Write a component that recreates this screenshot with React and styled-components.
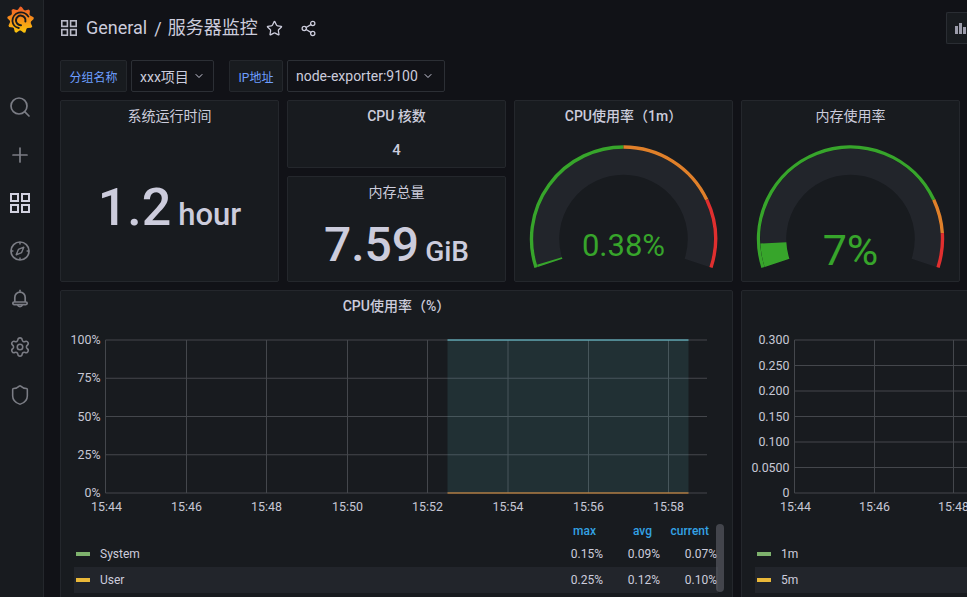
import React from 'react';
import styled, { createGlobalStyle } from 'styled-components';
import { Search, Plus, Settings, Shield, Star, Share2, ChevronDown } from 'lucide-react';

const GlobalStyle = createGlobalStyle`
  html, body {
    margin: 0;
    height: 100%;
    overflow: hidden;
    background: #111217;
  }
  * { box-sizing: border-box; }
`;

const fontStack = `Roboto, "Noto Sans CJK SC", sans-serif`;

const Page = styled.div`
  display: flex;
  width: 967px;
  height: 597px;
  overflow: hidden;
  background: #111217;
  color: #ccccdc;
  font-family: ${fontStack};
`;

const Sidebar = styled.nav`
  flex: 0 0 44px;
  display: flex;
  flex-direction: column;
  align-items: center;
  background: #181b1f;
  border-right: 1px solid #24272c;
`;

const LogoWrap = styled.div`
  height: 83px;
  padding-top: 6px;
  margin-left: -2px;
`;

const NavItem = styled.div`
  flex: 0 0 48px;
  width: 100%;
  display: flex;
  align-items: center;
  justify-content: center;
  padding-right: 3px;
  color: ${p => (p.$active ? '#d2d2e0' : '#7b7d85')};
`;

const Main = styled.main`
  flex: 1;
  min-width: 0;
  padding: 0 0 0 16px;
  display: flex;
  flex-direction: column;
`;

const TopBar = styled.header`
  flex: 0 0 60px;
  display: flex;
  align-items: center;
  padding: 0 0 4px 1px;
`;

const Crumb = styled.span`
  margin-left: ${p => p.$gap ?? 9}px;
  font-size: 18px;
  line-height: 24px;
  color: #ccccdc;
  white-space: nowrap;
`;

const Slash = styled.span`
  margin: 0 6px 0 7px;
  font-size: 18px;
  color: #ccccdc;
`;

const ToolIcon = styled.span`
  display: inline-flex;
  color: #ccccdc;
  margin-left: ${p => p.$gap}px;
`;

const EdgeButton = styled.div`
  margin-left: auto;
  margin-right: -1px;
  width: 22px;
  height: 32px;
  background: #181b1f;
  border: 1px solid #2a2d33;
  border-right: none;
  border-radius: 2px 0 0 2px;
  padding: 0 0 9px 8px;
  overflow: hidden;
  display: flex;
  align-items: flex-end;
  gap: 1px;
`;

const Bar = styled.i`
  display: block;
  flex: 0 0 3px;
  height: ${p => p.$h}px;
  background: #9c9cab;
`;

const Variables = styled.div`
  flex: 0 0 32px;
  display: flex;
  margin-bottom: 8px;
`;

const VarLabel = styled.div`
  height: 32px;
  padding: 0 8px;
  display: flex;
  align-items: center;
  justify-content: center;
  width: ${p => p.$w}px;
  margin-left: ${p => p.$gap || 0}px;
  font-size: 12px;
  color: #6e9fff;
  background: #181b1f;
  border: 1px solid #24272c;
  border-radius: 2px;
  white-space: nowrap;
`;

const VarSelect = styled.div`
  height: 32px;
  width: ${p => p.$w}px;
  margin-left: 4px;
  padding-left: 8px;
  display: flex;
  align-items: center;
  gap: 4px;
  font-size: 14px;
  color: #ccccdc;
  background: #111217;
  border: 1px solid #2c2f35;
  border-radius: 2px;
  white-space: nowrap;
`;

const Grid = styled.div`
  flex: 0 0 182px;
  display: grid;
  grid-template-columns: 219px 219px 219px 219px;
  grid-template-rows: 68px 106px;
  gap: 8px;
`;

const Panel = styled.section`
  position: relative;
  min-width: 0;
  min-height: 0;
  background: #181b1f;
  border: 1px solid #24272c;
  border-radius: 2px;
  display: flex;
  flex-direction: column;
  grid-column: ${p => p.$col};
  grid-row: ${p => p.$row};
  overflow: hidden;
`;

const PanelTitle = styled.h2`
  margin: 0;
  flex: 0 0 30px;
  height: 30px;
  line-height: 30px;
  text-align: center;
  font-size: 14px;
  font-weight: ${p => (p.$bold ? 500 : 400)};
  color: #ccccdc;
  white-space: nowrap;
`;

const StatBody = styled.div`
  flex: 1;
  display: flex;
  align-items: center;
  justify-content: center;
  padding-top: ${p => p.$pt || 0}px;
  color: #ccccdc;
  font-size: ${p => p.$size}px;
  font-weight: 500;
  line-height: 1;
  white-space: nowrap;
`;

const StatText = styled.span`
  display: inline-block;
`;

const Unit = styled.span`
  font-size: ${p => p.$size}px;
  margin-left: ${p => p.$gap}px;
`;

const GaugeSvg = styled.svg`
  display: block;
  margin-top: -30px;
  flex: 0 0 auto;
`;

const Charts = styled.div`
  flex: 0 0 320px;
  display: grid;
  grid-template-columns: 673px 400px;
  gap: 8px;
  margin-top: 8px;
`;

const ChartPanel = styled.section`
  min-width: 0;
  background: #181b1f;
  border: 1px solid #24272c;
  border-radius: 2px;
  position: relative;
  overflow: hidden;
`;

const ChartSvg = styled.svg`
  display: block;
  margin-top: 5px;
  height: 194px;
  width: 100%;
`;

const Legend = styled.div`
  position: relative;
  margin: 2px 0 0 ${p => p.$left}px;
  width: ${p => p.$width}px;
  font-size: 12px;
`;

const LegendHead = styled.div`
  display: grid;
  grid-template-columns: 1fr 57px 57px 57px;
  height: 18px;
  line-height: 18px;
  padding-right: 1px;
  font-weight: 500;
  color: #33a2e5;
  text-align: right;
  margin-bottom: 1px;
`;

const HeadCell = styled.div`
  padding-right: ${p => p.$pad}px;
`;

const LegendRow = styled.div`
  display: grid;
  grid-template-columns: 1fr 57px 57px 57px;
  align-items: center;
  height: 26px;
  padding-right: 1px;
  color: #ccccdc;
  background: ${p => (p.$alt ? '#22252b' : 'transparent')};
`;

const SeriesName = styled.div`
  display: flex;
  align-items: center;
  gap: 10px;
  padding-left: 2px;
`;

const Swatch = styled.i`
  display: block;
  width: 14px;
  height: 4px;
  background: ${p => p.$color};
`;

const Value = styled.div`
  text-align: right;
`;

const Scrollbar = styled.div`
  position: absolute;
  top: 2px;
  right: -6px;
  width: 8px;
  height: 68px;
  border-radius: 4px;
  background: rgba(120, 122, 130, 0.45);
`;

// spiky outline of the logo
const logoOutline = () => {
  const pts = [];
  const cx = 13.5;
  const cy = 14;
  const step = (Math.PI * 2) / 9;
  for (let i = 0; i < 9; i++) {
    const a = i * step - Math.PI / 2 - 0.25;
    [[10.6, 0], [13.4, step * 0.32], [13.2, step * 0.5], [10.6, step * 0.82]].forEach(([r, off]) => {
      pts.push(`${(cx + Math.cos(a + off) * r).toFixed(1)},${(cy + Math.sin(a + off) * r).toFixed(1)}`);
    });
  }
  return pts.join(' ');
};

const Logo = () => (
  <svg width="27" height="28" viewBox="0 0 27 28">
    <defs>
      <linearGradient id="logoGrad" x1="0" y1="0" x2="0" y2="28" gradientUnits="userSpaceOnUse">
        <stop offset="0" stopColor="#f05a28" />
        <stop offset="1" stopColor="#fbca0a" />
      </linearGradient>
    </defs>
    <polygon points={logoOutline()} fill="url(#logoGrad)" />
    <path
      d="M21.4 10.6a8.6 8.6 0 0 0-16 4.4a8 8 0 0 0 6.4 7"
      fill="none"
      stroke="#181b1f"
      strokeWidth="1.8"
      strokeLinecap="round"
    />
    <path
      d="M18.4 15.6a4.8 4.8 0 1 0-4.4 3.6"
      fill="none"
      stroke="#181b1f"
      strokeWidth="2"
      strokeLinecap="round"
    />
  </svg>
);

const GridIcon = ({ size = 20, color = 'currentColor' }) => (
  <svg width={size} height={size} viewBox="0 0 20 20" fill="none" stroke={color} strokeWidth="2">
    <rect x="1" y="1" width="7" height="7" />
    <rect x="12" y="1" width="7" height="7" />
    <rect x="1" y="12" width="7" height="7" />
    <rect x="12" y="12" width="7" height="7" />
  </svg>
);

const CompassIcon = () => (
  <svg width="20" height="20" viewBox="0 0 20 20" fill="none" stroke="currentColor" strokeWidth="1.7">
    <circle cx="10" cy="10" r="9" />
    <path d="M10 1v2.4M10 16.6V19M1 10h2.4M16.6 10H19" strokeWidth="1.5" />
    <path d="M13.8 6.2 11.6 11.6 6.2 13.8 8.4 8.4z" strokeWidth="1.4" strokeLinejoin="round" />
  </svg>
);

const BellIcon = () => (
  <svg width="20" height="20" viewBox="0 0 20 20" fill="none" stroke="currentColor" strokeWidth="1.7" strokeLinejoin="round">
    <path d="M10 0.8v2" />
    <path d="M4.8 13V8.4a5.2 5.2 0 0 1 10.4 0V13" />
    <rect x="2.8" y="13" width="14.4" height="2.6" rx="1.3" />
    <path d="M7.6 15.8a2.5 2.5 0 0 0 4.8 0" />
  </svg>
);

const polar = (cx, cy, r, deg) => {
  const a = (deg * Math.PI) / 180;
  return [cx + r * Math.cos(a), cy + r * Math.sin(a)];
};

const arc = (cx, cy, r, from, to) => {
  const [x1, y1] = polar(cx, cy, r, from);
  const [x2, y2] = polar(cx, cy, r, to);
  return `M${x1} ${y1}A${r} ${r} 0 ${to - from > 180 ? 1 : 0} 1 ${x2} ${y2}`;
};

const START = 162;
const SPAN = 216;
const valueAngle = v => START + (SPAN * v) / 100;

const Gauge = ({ value, label, size, baseline, thresholds }) => {
  const cx = 108.5;
  const cy = 138;
  // a value near zero still shows as a sliver
  const end = Math.max(valueAngle(value), START + 1.4);
  return (
    <GaugeSvg width="217" height="181" viewBox="0 0 217 181">
      <path d={arc(cx, cy, 77.25, START, START + SPAN)} fill="none" stroke="#22252b" strokeWidth="26" />
      {thresholds.map(([from, to, color]) => (
        <path key={color} d={arc(cx, cy, 92, valueAngle(from), valueAngle(to))} fill="none" stroke={color} strokeWidth="3.4" />
      ))}
      <path d={arc(cx, cy, 77.25, START, end)} fill="none" stroke="#37a52b" strokeWidth="26" />
      <text x={cx} y={cy + baseline} textAnchor="middle" fontSize={size} fontWeight="400" fontFamily={fontStack} fill="#37a52b">
        {label}
      </text>
    </GaugeSvg>
  );
};

const AxisText = styled.text`
  font-family: ${fontStack};
  font-size: 12.4px;
  fill: #c7c7d5;
`;

const GRID = '#44474c';

// panel-local coordinates: the chart svg starts 35px under the panel's inner top
const TimeChart = ({ left, right, yTicks, xTicks, children, width }) => {
  const top = 14;
  const bottom = 167;
  const step = (bottom - top) / (yTicks.length - 1);
  return (
    <ChartSvg viewBox={`0 0 ${width} 194`} preserveAspectRatio="xMinYMin">
      {yTicks.map((t, i) => (
        <g key={t}>
          <line x1={left} x2={right} y1={top + i * step} y2={top + i * step} stroke={GRID} />
          <AxisText x={left - 5} y={top + i * step + 4} textAnchor="end">{t}</AxisText>
        </g>
      ))}
      {xTicks.map(([x, t], i) => (
        <g key={t}>
          <line x1={x} x2={x} y1={top} y2={bottom} stroke={GRID} />
          <AxisText x={x + (i === 0 ? 1 : 0)} y={bottom + 18} textAnchor="middle">{t}</AxisText>
        </g>
      ))}
      {children}
    </ChartSvg>
  );
};

const cpuTicks = [
  [44.5, '15:44'], [125.5, '15:46'], [205.5, '15:48'], [286.5, '15:50'],
  [366.5, '15:52'], [447, '15:54'], [527.5, '15:56'], [607.5, '15:58'],
];
const loadTicks = [[52.5, '15:44'], [132.5, '15:46'], [211.5, '15:48']];

const App = () => (
  <Page>
    <GlobalStyle />
    <Sidebar>
      <LogoWrap><Logo /></LogoWrap>
      <NavItem><Search size={24} strokeWidth={1.7} /></NavItem>
      <NavItem><Plus size={24} strokeWidth={1.7} /></NavItem>
      <NavItem $active><GridIcon /></NavItem>
      <NavItem><CompassIcon /></NavItem>
      <NavItem><BellIcon /></NavItem>
      <NavItem><Settings size={22} strokeWidth={1.7} /></NavItem>
      <NavItem><Shield size={22} strokeWidth={1.7} /></NavItem>
    </Sidebar>
    <Main>
      <TopBar>
        <GridIcon size={16} color="#b9b9c7" />
        <Crumb>General</Crumb>
        <Slash>/</Slash>
        <Crumb $gap={0}>服务器监控</Crumb>
        <ToolIcon $gap={8}><Star size={17} strokeWidth={1.8} /></ToolIcon>
        <ToolIcon $gap={17}><Share2 size={17} strokeWidth={1.8} /></ToolIcon>
        <EdgeButton>
          <Bar $h={8} /><Bar $h={11} /><Bar $h={7} />
        </EdgeButton>
      </TopBar>
      <Variables>
        <VarLabel $w={67}>分组名称</VarLabel>
        <VarSelect $w={83}>xxx项目<ChevronDown size={12} strokeWidth={2} /></VarSelect>
        <VarLabel $w={54} $gap={15}>IP地址</VarLabel>
        <VarSelect $w={158}>node-exporter:9100<ChevronDown size={12} strokeWidth={2} /></VarSelect>
      </Variables>
      <Grid>
        <Panel $col={1} $row="1 / span 2">
          <PanelTitle>系统运行时间</PanelTitle>
          <StatBody $size={52} $pt={3}>
            <StatText>1.2<Unit $size={31} $gap={7}>hour</Unit></StatText>
          </StatBody>
        </Panel>
        <Panel $col={2} $row={1}>
          <PanelTitle $bold>CPU 核数</PanelTitle>
          <StatBody $size={15} $pt={3}>4</StatBody>
        </Panel>
        <Panel $col={2} $row={2}>
          <PanelTitle>内存总量</PanelTitle>
          <StatBody $size={48} $pt={2}>
            <StatText>7.59<Unit $size={28} $gap={6}>GiB</Unit></StatText>
          </StatBody>
        </Panel>
        <Panel $col={3} $row="1 / span 2">
          <PanelTitle $bold>CPU使用率（1m）</PanelTitle>
          <Gauge
            value={0.38}
            label="0.38%"
            size={31}
            baseline={17}
            thresholds={[[0, 50, '#37a52b'], [50, 80, '#e0802a'], [80, 100, '#e02f2f']]}
          />
        </Panel>
        <Panel $col={4} $row="1 / span 2">
          <PanelTitle>内存使用率</PanelTitle>
          <Gauge
            value={7}
            label="7%"
            size={43}
            baseline={26}
            thresholds={[[0, 80, '#37a52b'], [80, 90, '#e0802a'], [90, 100, '#e02f2f']]}
          />
        </Panel>
      </Grid>
      <Charts>
        <ChartPanel>
          <PanelTitle $bold>CPU使用率（%）</PanelTitle>
          <TimeChart
            width={671}
            left={44.5}
            right={646}
            yTicks={['100%', '75%', '50%', '25%', '0%']}
            xTicks={cpuTicks}
          >
            <rect x="386.5" y="14" width="241" height="153" fill="#5fb4b8" fillOpacity="0.14" />
            <line x1="386.5" x2="627.5" y1="14" y2="14" stroke="#6ed0e0" />
            <line x1="386.5" x2="627.5" y1="167" y2="167" stroke="#e5953e" />
          </TimeChart>
          <Legend $left={13} $width={644}>
            <LegendHead>
              <div />
              <HeadCell $pad={7}>max</HeadCell>
              <HeadCell $pad={8}>avg</HeadCell>
              <HeadCell $pad={8}>current</HeadCell>
            </LegendHead>
            <LegendRow>
              <SeriesName><Swatch $color="#7eb26d" />System</SeriesName>
              <Value>0.15%</Value><Value>0.09%</Value><Value>0.07%</Value>
            </LegendRow>
            <LegendRow $alt>
              <SeriesName><Swatch $color="#eab839" />User</SeriesName>
              <Value>0.25%</Value><Value>0.12%</Value><Value>0.10%</Value>
            </LegendRow>
            <Scrollbar />
          </Legend>
        </ChartPanel>
        <ChartPanel>
          <PanelTitle />
          <TimeChart
            width={398}
            left={52.5}
            right={398}
            yTicks={['0.300', '0.250', '0.200', '0.150', '0.100', '0.0500', '0']}
            xTicks={loadTicks}
          />
          <Legend $left={13} $width={380}>
            <LegendHead />
            <LegendRow>
              <SeriesName><Swatch $color="#7eb26d" />1m</SeriesName>
            </LegendRow>
            <LegendRow $alt>
              <SeriesName><Swatch $color="#eab839" />5m</SeriesName>
            </LegendRow>
          </Legend>
        </ChartPanel>
      </Charts>
    </Main>
  </Page>
);

export default App;
